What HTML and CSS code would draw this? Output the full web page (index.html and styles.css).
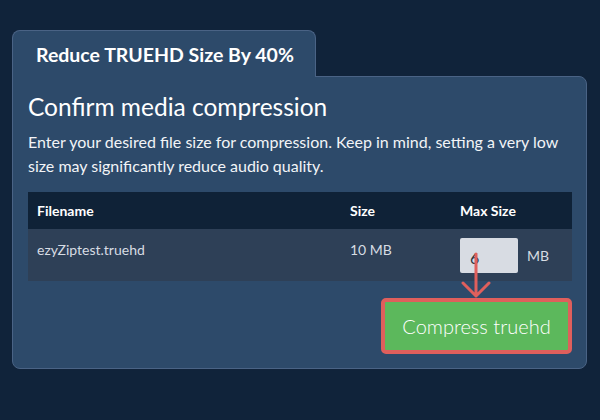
FILE: index.html
```html
<!DOCTYPE html>
<html lang="en">
<head>
    <meta charset="UTF-8">
    <meta name="viewport" content="width=device-width, initial-scale=1.0">
    <title>Reduce TRUEHD Size</title>
    <link rel="stylesheet" href="styles.css">
</head>
<body>

    <div class="wrapper">
        <div class="tab">Reduce TRUEHD Size By 40%</div>
        <div class="panel">
            <h2>Confirm media compression</h2>
            <p>Enter your desired file size for compression. Keep in mind, setting a very low size may significantly reduce audio quality.</p>
            <table class="files">
                <thead>
                    <tr>
                        <th class="col-name">Filename</th>
                        <th class="col-size">Size</th>
                        <th class="col-max">Max Size</th>
                    </tr>
                </thead>
                <tbody>
                    <tr>
                        <td>ezyZiptest.truehd</td>
                        <td>10 MB</td>
                        <td>
                            <div class="max-size">
                                <input type="text" id="maxSize" value="6">
                                <span>MB</span>
                            </div>
                        </td>
                    </tr>
                </tbody>
            </table>
            <div class="actions">
                <button class="compress">Compress truehd</button>
            </div>
            <svg class="pointer" width="36" height="50" viewBox="0 0 36 50">
                <path d="M18 4 V46 M5 33 L18 46 L31 33" fill="none" stroke="#df5f5c" stroke-width="3" stroke-linecap="round" stroke-linejoin="round"/>
            </svg>
        </div>
    </div>

</body>
</html>
```

FILE: styles.css
```css
body {
    font-family: Lato, "Open Sans", sans-serif;
    margin: 0;
    padding: 0;
    background-color: #10233a;
    color: #ffffff;
    height: 100vh;
}
.wrapper {
    padding: 30px 13px 0 12px;
}
.tab {
    display: inline-block;
    position: relative;
    z-index: 1;
    background-color: #2d4a6a;
    border: 1px solid #4a6385;
    border-bottom: none;
    border-radius: 8px 8px 0 0;
    padding: 13px 21px 11px 23px;
    margin-bottom: -1px;
    font-size: 19.5px;
    font-weight: bold;
    line-height: 22px;
    height: 22px;
}
.panel {
    position: relative;
    background-color: #2d4a6a;
    border: 1px solid #4a6385;
    border-radius: 0 8px 8px 8px;
    padding: 15px 14px 14px 15px;
}
.panel h2 {
    margin: 0;
    font-size: 24.5px;
    font-weight: normal;
    line-height: 29px;
}
.panel p {
    margin: 9px 0 0;
    font-size: 16px;
    line-height: 24px;
    color: #f2f4f7;
}
.files {
    width: 100%;
    margin-top: 14px;
    border-collapse: collapse;
    font-size: 14px;
}
.files th {
    background-color: #0f2237;
    text-align: left;
    font-weight: bold;
    height: 37px;
    padding: 0 9px;
}
.files td {
    background-color: #2e4057;
    color: #d7dce3;
    vertical-align: top;
    padding: 11px 9px 8px;
    line-height: 20px;
}
.col-name {
    width: 295px;
}
.col-size {
    width: 92px;
}
.max-size {
    display: flex;
    align-items: center;
    margin-top: -2px;
}
.max-size input {
    width: 58px;
    height: 35px;
    box-sizing: border-box;
    border: none;
    border-radius: 2px;
    background-color: #d8dce3;
    color: #2b323c;
    font-family: Lato, sans-serif;
    font-size: 16px;
    padding: 4px 0 0 10px;
    margin-right: 9px;
}
.max-size span {
    font-size: 14px;
}
.actions {
    display: flex;
    justify-content: flex-end;
    margin-top: 17px;
}
.compress {
    background-color: #5cb85c;
    color: #ffffff;
    border: 4px solid #df5f5c;
    border-radius: 5px;
    width: 191px;
    height: 56px;
    font-family: Lato, sans-serif;
    font-size: 20px;
    font-weight: 300;
    cursor: pointer;
}
.pointer {
    position: absolute;
    left: 445px;
    top: 173px;
}
```
